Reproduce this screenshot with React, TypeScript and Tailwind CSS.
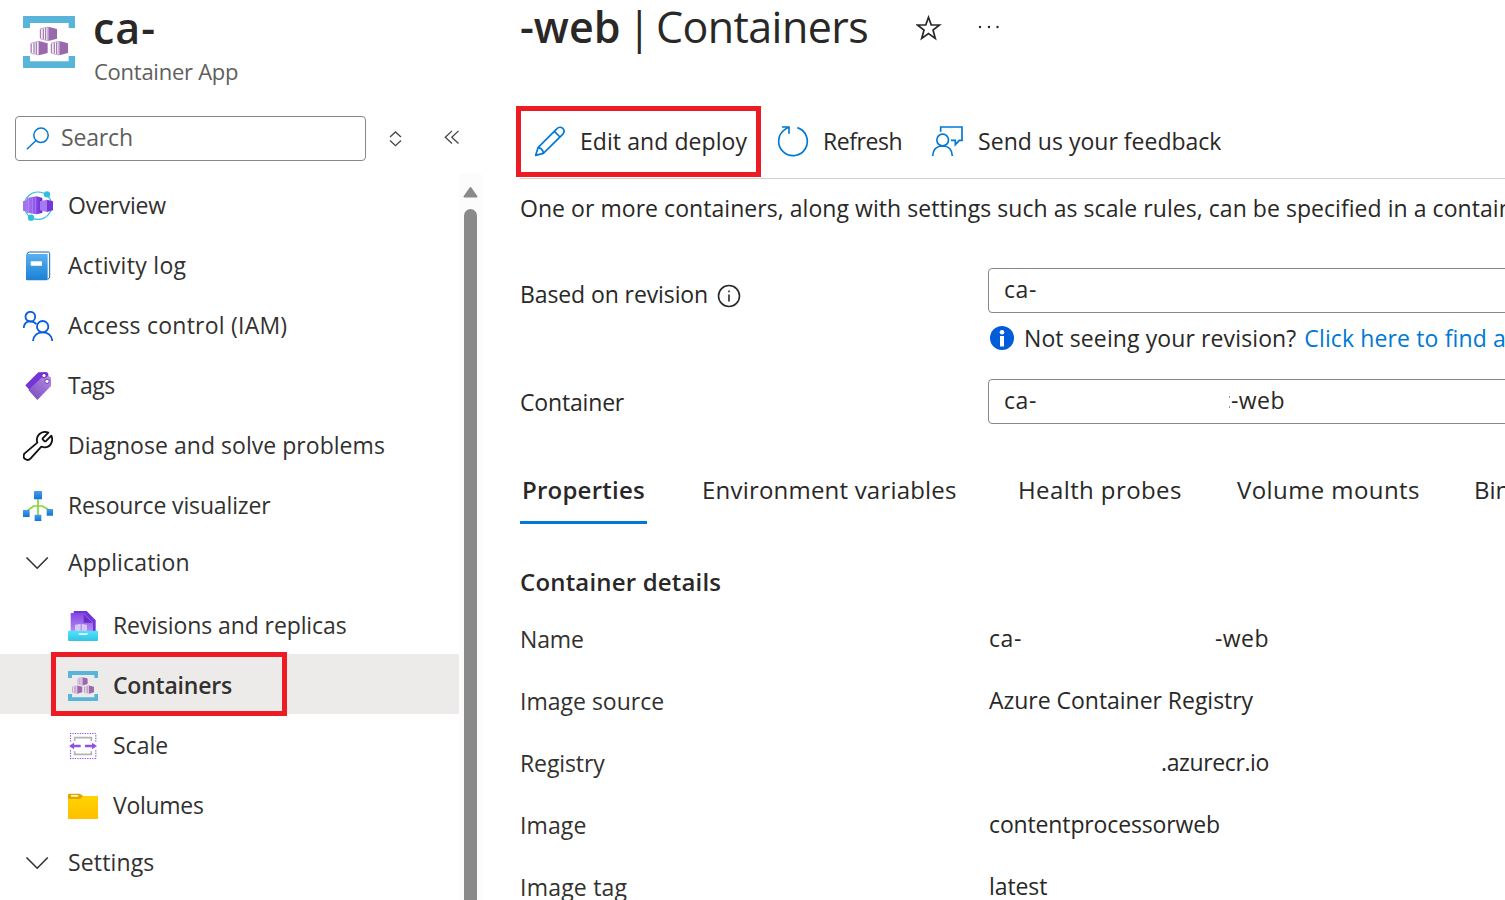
import type { ReactNode } from 'react';

type IconProps = { className?: string };

function ContainersIcon({ className }: IconProps) {
  const cube = (x: number, y: number) => (
    <g transform={`translate(${x} ${y})`}>
      <path d="M25 0 51 7V36L25 43Z" fill="#9a69ab" />
      <path d="M0 7 22 1V42L0 36Z" fill="#fff" />
      <path d="M1.500 8V35M10 6V37M17 4V39" stroke="#a77cb7" strokeWidth="4" />
      <path d="M0 7 23 1V42L0 36" fill="none" stroke="#a77cb7" strokeWidth="2" />
    </g>
  );
  return (
    <svg viewBox="0 0 156 156" className={className}>
      <path d="M0 2Q0 0 2 0H154Q156 0 156 2V36H137V21H21V36H0Z" fill="#59b4d9" />
      <path d="M0 120H21V136H137V120H156V154Q156 156 154 156H2Q0 156 0 154Z" fill="#59b4d9" />
      {cube(51, 32)}
      {cube(23, 75)}
      {cube(84, 75)}
    </svg>
  );
}

function OverviewIcon() {
  return (
    <svg viewBox="0 0 90 90" className="size-[30px] overflow-visible">
      <defs>
        <linearGradient id="ov" x1="0" x2="1">
          <stop offset="0" stopColor="#a67af4" />
          <stop offset=".6" stopColor="#8a4fe8" />
          <stop offset="1" stopColor="#6326c9" />
        </linearGradient>
      </defs>
      <circle cx="45" cy="44" r="41" fill="none" stroke="#32bedd" strokeWidth="3.5" />
      <path d="M0 31 13 27V62L0 59Z" fill="#a274ee" />
      <path d="M11 21 42 16 58 21V65L42 70 11 65Z" fill="url(#ov)" />
      <path d="M17 22V64M28 21V66M37 20V67" stroke="#c5a5f8" strokeWidth="1.5" />
      <path d="M51 31 72 26V63L51 58Z" fill="#a67af4" />
      <path d="M72 26 90 31V58L72 63Z" fill="#7636dc" />
      <circle cx="72" cy="10" r="9.5" fill="#32bedd" />
      <circle cx="24" cy="80" r="9.5" fill="#32bedd" />
    </svg>
  );
}

function ActivityLogIcon() {
  return (
    <svg viewBox="0 0 90 90" className="size-[30px]">
      <defs>
        <linearGradient id="al" x1="0" x2="0" y1="0" y2="1">
          <stop offset="0" stopColor="#5ab0f0" />
          <stop offset="1" stopColor="#1a80d4" />
        </linearGradient>
      </defs>
      <path d="M12 9Q13 3 20 3H76Q80 3 80 8V78Q80 82 74 85" fill="#fff" stroke="#1765a8" strokeWidth="3" />
      <rect x="9" y="9" width="65" height="79" rx="3" fill="url(#al)" />
      <rect x="23" y="31" width="34" height="13" rx="1" fill="#fff" />
    </svg>
  );
}

function PeopleIcon() {
  return (
    <svg viewBox="0 0 90 90" className="size-[30px]" fill="none" stroke="#0a5de0" strokeWidth="5.5">
      <circle cx="22" cy="17" r="14.5" />
      <path d="M2 51C3 38 11 31 22 31C30 31 36 34 40 40" />
      <circle cx="59" cy="47" r="17" />
      <path d="M30 90C32 73 44 64 59 64S86 73 88 90" />
    </svg>
  );
}

function TagsIcon() {
  return (
    <svg viewBox="0 0 90 90" className="size-[30px]">
      <defs>
        <linearGradient id="tg" x1="1" x2=".2" y1="0" y2="1">
          <stop offset="0" stopColor="#b98ae6" />
          <stop offset="1" stopColor="#7a4fbd" />
        </linearGradient>
      </defs>
      <path d="M7 43 46 4 68 3Q75 3 76 10V22L24 62Z" fill="#7434d8" />
      <path d="M16 57 57 19 76 16Q84 16 84 24V45L43 87Z" fill="url(#tg)" />
      <circle cx="63" cy="14" r="6.5" fill="#fff" stroke="#5a2aa8" strokeWidth="3" />
      <circle cx="72" cy="31" r="6.5" fill="#fff" stroke="#6d3fb5" strokeWidth="3" />
    </svg>
  );
}

function WrenchIcon() {
  return (
    <svg viewBox="0 0 90 90" className="size-[30px]" fill="none" stroke="#111" strokeWidth="5.5" strokeLinejoin="round">
      <path d="M76 5 59 22V25L65 31H68L85 14C92 30 83 49 65 49C61 49 58 48 55 47L23 82C13 93-5 82 5 67L43 35C36 14 56-3 76 5Z" />
    </svg>
  );
}

function VisualizerIcon() {
  return (
    <svg viewBox="0 0 90 90" className="size-[30px]">
      <defs>
        <linearGradient id="rv" x1="0" x2="0" y1="0" y2="1">
          <stop offset="0" stopColor="#4a9ceb" />
          <stop offset="1" stopColor="#0f75d8" />
        </linearGradient>
      </defs>
      <path d="M45 24V73M10 61 32 45H58L80 58" fill="none" stroke="#86d633" strokeWidth="5" />
      <rect x="33" y="0" width="24" height="25" rx="2" fill="url(#rv)" />
      <rect x="0" y="57" width="20" height="21" rx="1" fill="url(#rv)" />
      <rect x="35" y="71" width="20" height="19" rx="1" fill="url(#rv)" />
      <rect x="71" y="54" width="19" height="20" rx="1" fill="url(#rv)" />
    </svg>
  );
}

function RevisionsIcon() {
  return (
    <svg viewBox="0 0 90 90" className="size-[30px]">
      <defs>
        <linearGradient id="rp" x1="0" x2="0" y1="0" y2="1">
          <stop offset="0" stopColor="#8345e3" />
          <stop offset="1" stopColor="#b58df5" />
        </linearGradient>
        <linearGradient id="rt" x1="0" x2="0" y1="0" y2="1">
          <stop offset="0" stopColor="#4fe4fd" />
          <stop offset="1" stopColor="#35c3e2" />
        </linearGradient>
      </defs>
      <path d="M17 2Q17 0 19 0H56L83 28V62H17Z" fill="#7332d6" />
      <path d="M8 8Q8 6 10 6H47L75 35V62H8Z" fill="url(#rp)" />
      <path d="M47 7V32Q47 35 50 35H75Z" fill="#6a2fcb" />
      <path d="M47 7 75 35" stroke="#b99cf2" strokeWidth="1.5" />
      <path d="M21 42 38 38V61H21ZM41 38 57 42V61H41Z" fill="#dcc6f8" />
      <path d="M0 61Q0 59 2 59H88Q90 59 90 61V86Q90 90 86 90H4Q0 90 0 86Z" fill="url(#rt)" />
      <path d="M30 67H61L56 72H35Z" fill="#f5feff" />
    </svg>
  );
}

function ScaleIcon() {
  return (
    <svg viewBox="0 0 90 90" className="size-[30px]" fill="none">
      <path d="M6 7.500H86M6 82.500H86" stroke="#8748e4" strokeWidth="3.5" strokeDasharray="3.5 3.9" />
      <path d="M7.500 13V34M7.500 58V82M83.500 13V34M83.500 58V82" stroke="#8748e4" strokeWidth="3.5" strokeDasharray="3.5 3.9" />
      <path d="M20 30V20H70V30M20 61V70H70V61" stroke="#b3b3b3" strokeWidth="5" />
      <path d="M10 45H38M51 45H80" stroke="#8f50ec" strokeWidth="7" />
      <path d="M3 45 18 35V55ZM87 45 72 35V55Z" fill="#8f50ec" />
    </svg>
  );
}

function FolderIcon() {
  return (
    <svg viewBox="0 0 90 90" className="size-[30px]">
      <defs>
        <linearGradient id="fd" x1="0" x2="0" y1="0" y2="1">
          <stop offset="0" stopColor="#ffd400" />
          <stop offset="1" stopColor="#ffbf00" />
        </linearGradient>
      </defs>
      <path d="M0 10Q0 8 3 8H36L46 16V30H0Z" fill="#dfa500" />
      <path d="M0 24H36L46 15H88Q90 15 90 17V81Q90 84 87 84H3Q0 84 0 81Z" fill="url(#fd)" />
      <rect x="9" y="12" width="22" height="5" rx="1" fill="#fff3c4" />
    </svg>
  );
}

function ChevronDown() {
  return (
    <svg viewBox="0 0 30 30" className="size-[30px]" fill="none" stroke="#323130" strokeWidth="1.6">
      <path d="M3.500 9.500 14.200 20.200 24.800 9.500" />
    </svg>
  );
}

function EditIcon() {
  return (
    <svg viewBox="0 0 90 90" className="-mt-px size-[30px] overflow-visible" fill="none" stroke="#0078d4" strokeWidth="5" strokeLinejoin="round">
      <path d="M2 88 9 65 66 8C77-4 95 12 83 25L25 82ZM58 16 75 33M9 65C19 66 24 72 25 82" />
    </svg>
  );
}

function RefreshIcon() {
  return (
    <svg viewBox="0 0 90 90" className="-mt-px size-[30px] overflow-visible" fill="none" stroke="#0078d4" strokeWidth="5">
      <path d="M58 5A43 43 0 1 1 20 11L32 3M12 3H33V23" />
    </svg>
  );
}

function FeedbackIcon() {
  return (
    <svg viewBox="0 0 93 90" className="-mt-px h-[30px] w-[31px] overflow-visible" fill="none" stroke="#0078d4" strokeWidth="5">
      <path d="M26 17V3H90V43H82L70 56V43H57" />
      <circle cx="32" cy="42" r="17.5" />
      <path d="M2 90C3 70 15 60 32 60S60 70 61 90" />
    </svg>
  );
}

function NavItem({ icon, label, tracking, indent, selected }: { icon: ReactNode; label: string; tracking: string; indent?: boolean; selected?: boolean }) {
  return (
    <div className={`flex h-[60px] w-[459px] shrink-0 items-center ${selected ? 'bg-[#edebe9]' : ''} ${indent ? 'pl-[51px]' : 'pl-[6px]'}`}>
      <div className={`flex h-[64px] items-center gap-[15px] border-5 pt-[2px] pr-[50px] pl-[12px] ${selected ? 'border-[#ed1c24]' : 'border-transparent'}`}>
        <span className="size-[30px] pt-px">{icon}</span>
        <span className={`leading-[30px] whitespace-nowrap ${tracking} ${selected ? 'font-semibold' : ''}`}>{label}</span>
      </div>
    </div>
  );
}

function NavGroup({ label, tracking }: { label: string; tracking: string }) {
  return (
    <div className="flex h-[60px] shrink-0 items-center gap-[15px] pb-[2px] pl-[23px]">
      <ChevronDown />
      <span className={`-mt-[2px] leading-[30px] ${tracking}`}>{label}</span>
    </div>
  );
}

function Sidebar() {
  return (
    <aside className="flex h-[900px] w-[516px] shrink-0 flex-col">
      <header className="flex h-[116px] shrink-0 pt-[5px] pl-[23px]">
        <ContainersIcon className="mt-[11px] size-[52px]" />
        <div className="ml-[18px] flex flex-col">
          <span className="h-[44px] text-[43px] leading-[45px] font-semibold tracking-[1px]">ca-</span>
          <span className="mt-[7px] ml-px text-[22px] leading-[30px] tracking-[-0.26px] text-[#605e5c]">Container App</span>
        </div>
      </header>
      <div className="flex h-[58px] shrink-0 items-start pl-[15px]">
        <div className="flex h-[45px] w-[351px] items-center rounded-[4px] border border-[#8a8886] pl-[10px]">
          <svg viewBox="0 0 24 24" className="size-[24px]" fill="none" stroke="#0078d4" strokeWidth="1.5">
            <circle cx="15" cy="8.300" r="7.200" />
            <path d="M10 13.500 .8 22.200" />
          </svg>
          <span className="-mt-[3px] ml-[11px] leading-[30px] tracking-[-0.15px] text-[#605e5c]">Search</span>
        </div>
        <svg viewBox="0 0 14 16" className="mt-[15px] ml-[22px] h-[16px] w-[14px]" fill="none" stroke="#484644" strokeWidth="1.3">
          <path d="M2 6 7.500 .9 13 6M2 9.600 7.500 14.700 13 9.600" />
        </svg>
        <svg viewBox="0 0 16 14" className="mt-[14px] ml-[42px] h-[14px] w-[16px]" fill="none" stroke="#484644" strokeWidth="1.3">
          <path d="M8 .9 1.300 7.200 8 13.500M14.500 .9 7.800 7.200 14.500 13.500" />
        </svg>
      </div>
      <div className="flex h-[726px]">
        <nav className="flex w-[459px] flex-col text-[#323130]">
          <NavItem icon={<OverviewIcon />} label="Overview" tracking="tracking-[-0.24px]" />
          <NavItem icon={<ActivityLogIcon />} label="Activity log" tracking="tracking-[0.31px]" />
          <NavItem icon={<PeopleIcon />} label="Access control (IAM)" tracking="tracking-[0.23px]" />
          <NavItem icon={<TagsIcon />} label="Tags" tracking="tracking-[-0.6px]" />
          <NavItem icon={<WrenchIcon />} label="Diagnose and solve problems" tracking="tracking-[0.04px]" />
          <NavItem icon={<VisualizerIcon />} label="Resource visualizer" tracking="tracking-[-0.14px]" />
          <NavGroup label="Application" tracking="tracking-[0.15px]" />
          <NavItem indent icon={<RevisionsIcon />} label="Revisions and replicas" tracking="tracking-[-0.1px]" />
          <NavItem indent selected icon={<ContainersIcon className="size-[30px]" />} label="Containers" tracking="tracking-[-0.22px]" />
          <NavItem indent icon={<ScaleIcon />} label="Scale" tracking="tracking-normal" />
          <NavItem indent icon={<FolderIcon />} label="Volumes" tracking="tracking-[-0.28px]" />
          <NavGroup label="Settings" tracking="tracking-[0.15px]" />
        </nav>
        <div className="flex w-[23px] flex-col items-center bg-[#fcfcfc] pt-[12px]">
          <svg viewBox="0 0 15 12" className="h-[12px] w-[15px]">
            <path d="M7.500 2 13.500 10.500H1.500Z" fill="#8a8a8a" stroke="#8a8a8a" strokeWidth="2" strokeLinejoin="round" />
          </svg>
          <div className="mt-[11px] w-[13px] flex-1 rounded-t-full bg-[#8a8a8a]" />
        </div>
      </div>
    </aside>
  );
}

function Field({ label, tracking, children }: { label: string; tracking: string; children: ReactNode }) {
  return (
    <div className="flex h-[62px] shrink-0 items-start">
      <span className={`w-[469px] shrink-0 leading-[32px] text-[#323130] ${tracking}`}>{label}</span>
      <span className="-mt-px flex leading-[32px]">{children}</span>
    </div>
  );
}

export default function App() {
  return (
    <div className="flex h-[900px] w-full overflow-hidden bg-white font-['Open_Sans','Noto_Sans',sans-serif] text-[23px] text-[#292827]">
      <Sidebar />
      <main className="flex h-[900px] min-w-0 flex-1 flex-col overflow-hidden whitespace-nowrap">
        <header className="flex h-[106px] shrink-0 items-start pl-[4px]">
          <h1 className="mt-[2px] flex w-[397px] text-[43px] leading-[50px]">
            <span className="font-semibold">-web</span>
            <span className="ml-[7px]">|</span>
            <span className="ml-[5px] tracking-[-0.6px]">Containers</span>
          </h1>
          <svg viewBox="0 0 26 26" className="mt-[15px] -ml-px size-[26px] shrink-0" fill="none" stroke="#292827" strokeWidth="1.7">
            <path d="M12.500 2.300 15.200 9.800 23.500 10 17 15.100 19.300 23.400 12.500 18.500 5.700 23.400 8 15.100 1.500 10 9.800 9.800Z" />
          </svg>
          <svg viewBox="0 0 22 4" className="mt-[25px] ml-[36px] h-[4px] w-[22px] shrink-0" fill="#292827">
            <circle cx="2" cy="2" r="1.200" />
            <circle cx="11" cy="2" r="1.200" />
            <circle cx="19.500" cy="2" r="1.200" />
          </svg>
        </header>
        <div className="flex h-[72px] shrink-0 items-start">
          <div className="flex h-[71px] w-[245px] items-center border-5 border-[#ed1c24] pl-[14px]">
            <EditIcon />
            <span className="ml-[15px] tracking-[0.07px]">Edit and deploy</span>
          </div>
          <div className="ml-[17px] flex h-[71px] items-center">
            <RefreshIcon />
            <span className="ml-[15px] tracking-[-0.45px]">Refresh</span>
          </div>
          <div className="ml-[30px] flex h-[71px] items-center">
            <FeedbackIcon />
            <span className="ml-[15px] tracking-[0.01px]">Send us your feedback</span>
          </div>
        </div>
        <div className="ml-[4px] h-px shrink-0 bg-[#d2d0ce]" />
        <p className="mt-[14px] ml-[4px] h-[30px] shrink-0 leading-[30px] tracking-[0.05px]">
          One or more containers, along with settings such as scale rules, can be specified in a container app.
        </p>
        <section className="flex h-[111px] shrink-0 pt-[45px] pl-[4px]">
          <div className="flex h-[52px] w-[468px] shrink-0 items-center">
            <span className="leading-[30px] tracking-[-0.1px]">Based on revision</span>
            <svg viewBox="0 0 24 24" className="mt-[4px] ml-[9px] size-[24px]" fill="none" stroke="#292827" strokeWidth="1.6">
              <circle cx="12" cy="12" r="10.500" />
              <path d="M12 10.500V17.500M12 6.500V8.300" />
            </svg>
          </div>
          <div className="flex shrink-0 flex-col">
            <div className="flex h-[45px] w-[600px] shrink-0 items-center rounded-[4px] border border-[#8a8886] pl-[15px]">
              <span className="-mt-[3px] leading-[30px] tracking-[0.6px]">ca-</span>
            </div>
            <div className="flex h-[50px] shrink-0 items-center">
              <svg viewBox="0 0 24 24" className="-mt-px ml-[2px] size-[24px]">
                <circle cx="12" cy="12" r="12" fill="#015cda" />
                <path d="M10 10H14V20.500H10Z" fill="#fff" />
                <circle cx="12" cy="6.200" r="2.300" fill="#fff" />
              </svg>
              <span className="ml-[10px] leading-[30px] tracking-[0.11px]">Not seeing your revision?</span>
              <span className="ml-[8px] leading-[30px] tracking-[0.13px] text-[#0078d4]">Click here to find all revisions</span>
            </div>
          </div>
        </section>
        <section className="flex h-[91px] shrink-0 pt-[45px] pl-[4px]">
          <span className="w-[468px] shrink-0 leading-[46px] tracking-[-0.17px]">Container</span>
          <div className="flex h-[45px] w-[600px] shrink-0 items-center rounded-[4px] border border-[#8a8886] pl-[15px]">
            <span className="-mt-[3px] w-[225px] leading-[30px] tracking-[0.6px]">ca-</span>
            <span className="flex h-[13px] w-[2px] flex-col justify-between pt-px">
              <span className="h-[2px] w-px bg-[#8d9bb8]" />
              <span className="h-[2px] w-px bg-[#8d9bb8]" />
            </span>
            <span className="-mt-[3px] leading-[30px] tracking-[0.45px]">-web</span>
          </div>
        </section>
        <div className="mt-[48px] flex h-[51px] shrink-0 items-start pl-[4px] text-[24px] leading-[34px]">
          <div className="h-[51px] w-[127px] shrink-0 border-b-3 border-[#0078d4] pl-[2px] font-semibold tracking-[0.23px]">Properties</div>
          <div className="ml-[55px] w-[316px] shrink-0 tracking-[0.2px]">Environment variables</div>
          <div className="w-[219px] shrink-0 tracking-[0.4px]">Health probes</div>
          <div className="w-[237px] shrink-0 tracking-[0.41px]">Volume mounts</div>
          <div>Bindings</div>
        </div>
        <h2 className="mt-[41px] ml-[4px] h-[34px] shrink-0 text-[24px] leading-[34px] font-semibold tracking-[0.18px]">Container details</h2>
        <section className="mt-[24px] flex flex-col pl-[4px]">
          <Field label="Name" tracking="tracking-[-0.13px]">
            <span className="w-[226px] tracking-[0.6px]">ca-</span>
            <span className="tracking-[0.45px]">-web</span>
          </Field>
          <Field label="Image source" tracking="tracking-[0px]">
            <span className="tracking-[-0.03px]">Azure Container Registry</span>
          </Field>
          <Field label="Registry" tracking="tracking-[-0.1px]">
            <span className="ml-[172px] tracking-[-0.38px]">.azurecr.io</span>
          </Field>
          <Field label="Image" tracking="tracking-[0.1px]">
            <span className="tracking-[-0.14px]">contentprocessorweb</span>
          </Field>
          <Field label="Image tag" tracking="tracking-[0.22px]">
            <span className="tracking-[-0.1px]">latest</span>
          </Field>
        </section>
      </main>
    </div>
  );
}
